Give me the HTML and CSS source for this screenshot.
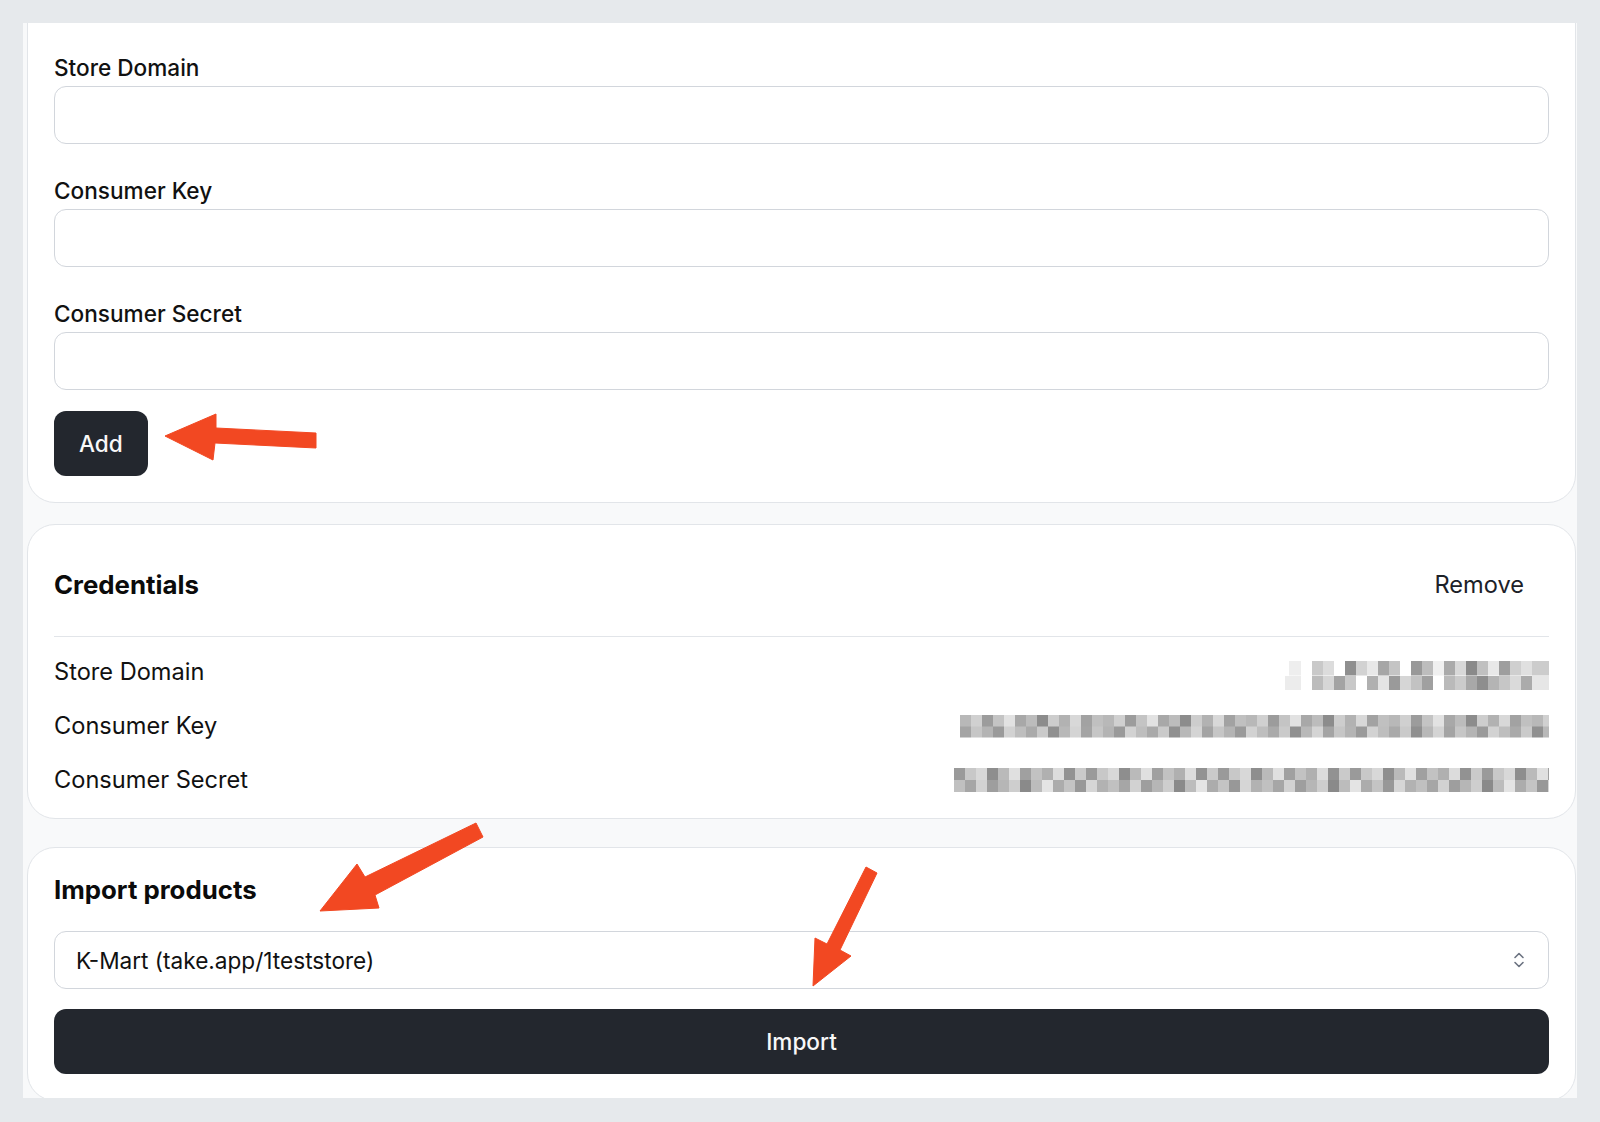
FILE: index.html
```html
<!DOCTYPE html>
<html lang="en">
<head>
<meta charset="utf-8">
<title>Credentials</title>
<link rel="stylesheet" href="styles.css">
</head>
<body>
<div class="frame">
  <div class="viewport">
    <section class="card card-form">
      <div class="fields">
        <div class="field">
          <label class="label" for="domain">Store Domain</label>
          <input class="input" id="domain" type="text">
        </div>
        <div class="field">
          <label class="label" for="key">Consumer Key</label>
          <input class="input" id="key" type="text">
        </div>
        <div class="field">
          <label class="label" for="secret">Consumer Secret</label>
          <input class="input" id="secret" type="text">
        </div>
      </div>
      <button class="btn btn-dark btn-add" type="button">Add</button>
    </section>

    <section class="card card-creds">
      <div class="card-header">
        <h2 class="heading">Credentials</h2>
        <button class="btn btn-ghost" type="button">Remove</button>
      </div>
      <div class="divider"></div>
      <div class="rows">
        <div class="row">
          <span class="row-label">Store Domain</span>
          <span class="mosaic m1"></span>
        </div>
        <div class="row">
          <span class="row-label">Consumer Key</span>
          <span class="mosaic m2"></span>
        </div>
        <div class="row">
          <span class="row-label">Consumer Secret</span>
          <span class="mosaic m3"></span>
        </div>
      </div>
    </section>

    <section class="card card-import">
      <h2 class="heading heading-import">Import products</h2>
      <div class="select-wrap">
        <select class="select">
          <option>K-Mart (take.app/1teststore)</option>
        </select>
        <svg class="chevrons" width="14" height="20" viewBox="0 0 14 20" aria-hidden="true">
          <path d="M3 7.5 L7 3.5 L11 7.5" fill="none" stroke="#6b7280" stroke-width="1.6" stroke-linecap="round" stroke-linejoin="round"/>
          <path d="M3 12.5 L7 16.5 L11 12.5" fill="none" stroke="#6b7280" stroke-width="1.6" stroke-linecap="round" stroke-linejoin="round"/>
        </svg>
      </div>
      <button class="btn btn-dark btn-import" type="button">Import</button>
    </section>
  </div>
</div>

<svg class="annotations" width="1600" height="1122" viewBox="0 0 1600 1122" aria-hidden="true">
  <polygon fill="#f24822" stroke="#f24822" stroke-width="1" stroke-linejoin="round"
    points="165,436 216,414 216,428 316,433 316,448 215,443 213,460"/>
  <polygon fill="#f24822" stroke="#f24822" stroke-width="1" stroke-linejoin="round"
    points="320,911 357,864 365,877 476,823 483,837 375,895 379,908"/>
  <polygon fill="#f24822" stroke="#f24822" stroke-width="1" stroke-linejoin="round"
    points="866,867 877,873 840,950 851,956 813,986 815,938 827,944"/>
</svg>
</body>
</html>
```

FILE: styles.css
```css
* {
  box-sizing: border-box;
}

html, body {
  margin: 0;
  padding: 0;
}

body {
  width: 1600px;
  height: 1122px;
  background: #e6e9ec;
  font-family: "Inter", "Noto Sans", "Liberation Sans", sans-serif;
  color: #111111;
  position: relative;
  overflow: hidden;
}

.frame {
  padding: 23px 23px 0 23px;
}

.viewport {
  height: 1075px;
  background: #f8f9fa;
  overflow: hidden;
  padding: 0 1px 0 4px;
}

.card {
  background: #ffffff;
  border: 1px solid #e2e5e9;
  border-radius: 28px;
  padding: 26px;
}

.card-form {
  margin-top: -30px;
  padding-top: 59px;
  padding-bottom: 26px;
}

.fields {
  display: flex;
  flex-direction: column;
  gap: 32px;
}

.field {
  display: flex;
  flex-direction: column;
  gap: 3px;
}

.label {
  font-size: 22.6px;
  line-height: 30px;
  font-weight: 500;
  color: #111111;
}

.input {
  height: 58px;
  border: 1px solid #d2d6dc;
  border-radius: 12px;
  background: #ffffff;
  font: inherit;
  font-size: 22px;
  padding: 0 20px;
  outline: none;
}

.btn {
  font-family: inherit;
  border: none;
  cursor: pointer;
}

.btn-dark {
  background: #23272e;
  color: #f8f8f8;
  border-radius: 12px;
  height: 65px;
  font-size: 22.6px;
  font-weight: 500;
}

.btn-add {
  margin-top: 21px;
  padding: 0 25px;
}

.card-creds {
  margin-top: 21px;
  padding-top: 27px;
  padding-bottom: 11px;
}

.card-header {
  display: flex;
  align-items: center;
  justify-content: space-between;
  height: 65px;
}

.heading {
  margin: 0;
  font-size: 25.8px;
  line-height: 32px;
  font-weight: 700;
  color: #0b0b0b;
}

.btn-ghost {
  background: transparent;
  color: #1c2128;
  height: 65px;
  padding: 0 25px;
  font-size: 23.6px;
  font-weight: 400;
  border-radius: 12px;
}

.divider {
  height: 1px;
  background: #e2e5e9;
  margin-top: 19px;
}

.rows {
  padding-top: 8px;
}

.row {
  display: flex;
  align-items: center;
  justify-content: space-between;
  height: 54px;
}

.row-label {
  font-size: 23.6px;
  line-height: 30px;
  color: #111111;
}

.mosaic {
  display: block;
}

.m1 {
  width: 268px;
  height: 29px;
  margin-top: 7px;
  background-image:
    linear-gradient(90deg, #ffffff 0 8px, #eeeeee 8px 20px, #ffffff 20px 31px, #c9c9c9 31px 42px, #dcdcdc 42px 53px, #ffffff 53px 64px, #8f8f8f 64px 75px, #d2d2d2 75px 86px, #e8e8e8 86px 97px, #a6a6a6 97px 108px, #c4c4c4 108px 119px, #ffffff 119px 130px, #999999 130px 141px, #bdbdbd 141px 152px, #f0f0f0 152px 163px, #aaaaaa 163px 174px, #d8d8d8 174px 185px, #8a8a8a 185px 196px, #c0c0c0 196px 207px, #e8e8e8 207px 218px, #9e9e9e 218px 229px, #cfcfcf 229px 240px, #e0e0e0 240px 251px, #cccccc 251px 268px),
    linear-gradient(90deg, #ffffff 0 4px, #ececec 4px 20px, #ffffff 20px 31px, #bcbcbc 31px 42px, #d6d6d6 42px 53px, #a3a3a3 53px 64px, #c8c8c8 64px 75px, #ffffff 75px 86px, #b0b0b0 86px 97px, #e4e4e4 97px 108px, #9a9a9a 108px 119px, #d6d6d6 119px 130px, #c2c2c2 130px 141px, #a0a0a0 141px 152px, #ffffff 152px 163px, #bababa 163px 174px, #cbcbcb 174px 185px, #a8a8a8 185px 196px, #8e8e8e 196px 207px, #b4b4b4 207px 218px, #c6c6c6 218px 229px, #dadada 229px 240px, #ababab 240px 251px, #e6e6e6 251px 268px);
  background-size: 100% 50%, 100% 50%;
  background-position: top left, bottom left;
  background-repeat: no-repeat;
}

.m2 {
  width: 589px;
  height: 23px;
  background-image:
    repeating-linear-gradient(90deg, #b8b8b8 0 11px, #d0d0d0 11px 22px, #9c9c9c 22px 33px, #c4c4c4 33px 44px, #e2e2e2 44px 55px, #a8a8a8 55px 66px, #bcbcbc 66px 77px, #8c8c8c 77px 88px, #cdcdcd 88px 99px, #b2b2b2 99px 110px, #d8d8d8 110px 121px, #a2a2a2 121px 132px, #c0c0c0 132px 143px),
    repeating-linear-gradient(90deg, #a4a4a4 0 11px, #c6c6c6 11px 22px, #b4b4b4 22px 33px, #9a9a9a 33px 44px, #d2d2d2 44px 55px, #bebebe 55px 66px, #aaaaaa 66px 77px, #cacaca 77px 88px, #909090 88px 99px, #b8b8b8 99px 110px, #d4d4d4 110px 121px);
  background-size: 100% 50%, 100% 50%;
  background-position: top left, bottom left;
  background-repeat: no-repeat;
}

.m3 {
  width: 595px;
  height: 24px;
  background-image:
    repeating-linear-gradient(90deg, #9a9a9a 0 11px, #c8c8c8 11px 22px, #d8d8d8 22px 33px, #8e8e8e 33px 44px, #bababa 44px 55px, #e0e0e0 55px 66px, #a0a0a0 66px 77px, #c2c2c2 77px 88px, #b0b0b0 88px 99px, #dcdcdc 99px 110px, #929292 110px 121px, #cacaca 121px 132px),
    repeating-linear-gradient(90deg, #c0c0c0 0 11px, #a6a6a6 11px 22px, #d2d2d2 22px 33px, #9e9e9e 33px 44px, #b6b6b6 44px 55px, #cecece 55px 66px, #8a8a8a 66px 77px, #bcbcbc 77px 88px, #e4e4e4 88px 99px, #acacac 99px 110px, #c4c4c4 110px 121px, #989898 121px 132px, #d6d6d6 132px 143px, #b2b2b2 143px 154px);
  background-size: 100% 50%, 100% 50%;
  background-position: top left, bottom left;
  background-repeat: no-repeat;
}

.card-import {
  margin-top: 28px;
}

.heading-import {
  margin-bottom: 25px;
}

.select-wrap {
  position: relative;
}

.select {
  display: block;
  width: 100%;
  height: 58px;
  appearance: none;
  -webkit-appearance: none;
  border: 1px solid #d2d6dc;
  border-radius: 12px;
  background: #ffffff;
  font-family: inherit;
  font-size: 22.6px;
  color: #111111;
  padding: 0 60px 0 21px;
  outline: none;
}

.chevrons {
  position: absolute;
  right: 23px;
  top: 19px;
  pointer-events: none;
}

.btn-import {
  display: block;
  width: 100%;
  margin-top: 20px;
}

.annotations {
  position: absolute;
  left: 0;
  top: 0;
  pointer-events: none;
}
```
